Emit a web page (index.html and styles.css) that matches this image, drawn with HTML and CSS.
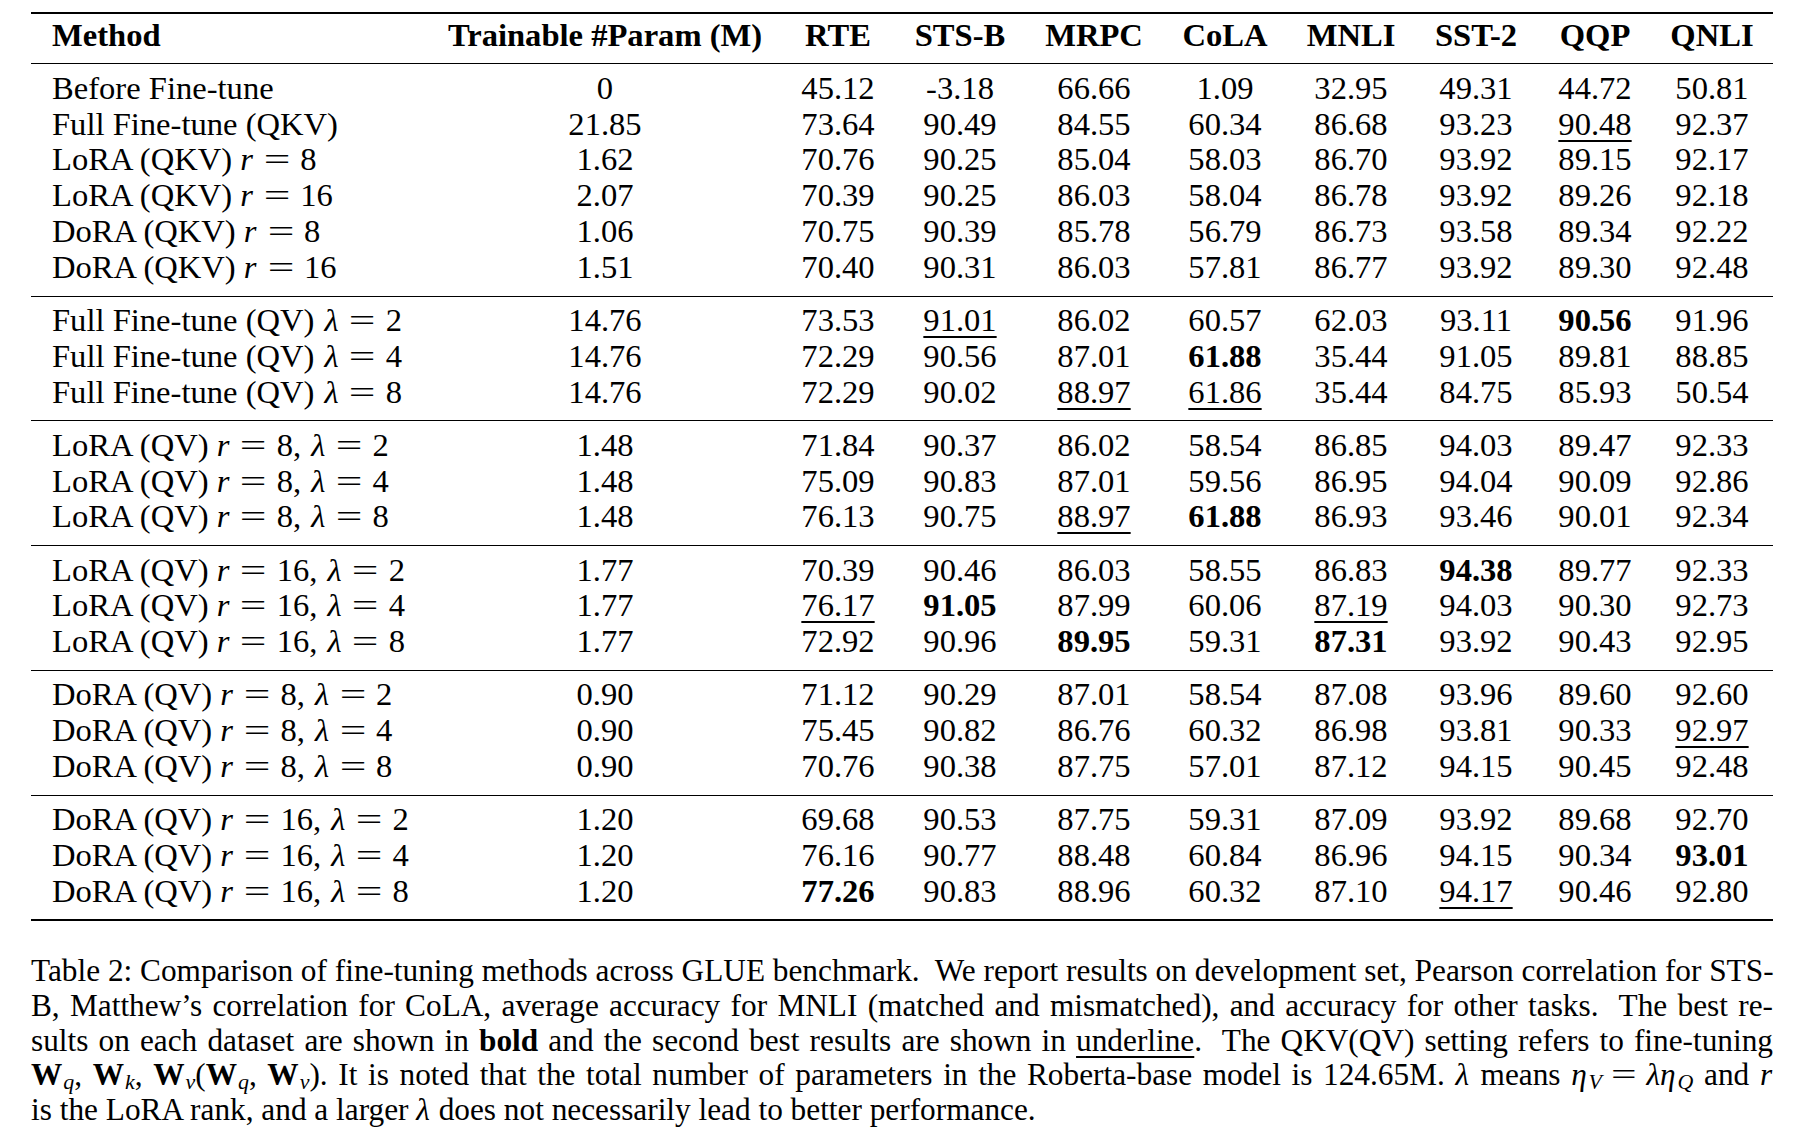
FILE: index.html
```html
<!DOCTYPE html>
<html lang="en">
<head>
<meta charset="utf-8">
<title>Table 2: Comparison of fine-tuning methods across GLUE benchmark</title>
<link rel="stylesheet" href="styles.css">
</head>
<body>
<div class="page">
  <table class="results">
    <colgroup>
      <col class="c-method">
      <col class="c-param">
      <col class="c-rte">
      <col class="c-stsb">
      <col class="c-mrpc">
      <col class="c-cola">
      <col class="c-mnli">
      <col class="c-sst2">
      <col class="c-qqp">
      <col class="c-qnli">
    </colgroup>
    <thead>
      <tr>
        <th class="name">Method</th>
        <th>Trainable #Param (M)</th>
        <th>RTE</th>
        <th>STS-B</th>
        <th>MRPC</th>
        <th>CoLA</th>
        <th>MNLI</th>
        <th>SST-2</th>
        <th>QQP</th>
        <th>QNLI</th>
      </tr>
    </thead>
    <tbody class="first-group">
      <tr><td class="name">Before Fine-tune</td><td>0</td><td>45.12</td><td>-3.18</td><td>66.66</td><td>1.09</td><td>32.95</td><td>49.31</td><td>44.72</td><td>50.81</td></tr>
      <tr><td class="name">Full Fine-tune (QKV)</td><td>21.85</td><td>73.64</td><td>90.49</td><td>84.55</td><td>60.34</td><td>86.68</td><td>93.23</td><td><span class="second">90.48</span></td><td>92.37</td></tr>
      <tr><td class="name">LoRA (QKV) <i class="mv">r</i><span class="eq">=</span>8</td><td>1.62</td><td>70.76</td><td>90.25</td><td>85.04</td><td>58.03</td><td>86.70</td><td>93.92</td><td>89.15</td><td>92.17</td></tr>
      <tr><td class="name">LoRA (QKV) <i class="mv">r</i><span class="eq">=</span>16</td><td>2.07</td><td>70.39</td><td>90.25</td><td>86.03</td><td>58.04</td><td>86.78</td><td>93.92</td><td>89.26</td><td>92.18</td></tr>
      <tr><td class="name">DoRA (QKV) <i class="mv">r</i><span class="eq">=</span>8</td><td>1.06</td><td>70.75</td><td>90.39</td><td>85.78</td><td>56.79</td><td>86.73</td><td>93.58</td><td>89.34</td><td>92.22</td></tr>
      <tr><td class="name">DoRA (QKV) <i class="mv">r</i><span class="eq">=</span>16</td><td>1.51</td><td>70.40</td><td>90.31</td><td>86.03</td><td>57.81</td><td>86.77</td><td>93.92</td><td>89.30</td><td>92.48</td></tr>
    </tbody>
    <tbody>
      <tr><td class="name">Full Fine-tune (QV) <i class="mv lam">λ</i><span class="eq">=</span>2</td><td>14.76</td><td>73.53</td><td><span class="second">91.01</span></td><td>86.02</td><td>60.57</td><td>62.03</td><td>93.11</td><td><b class="best">90.56</b></td><td>91.96</td></tr>
      <tr><td class="name">Full Fine-tune (QV) <i class="mv lam">λ</i><span class="eq">=</span>4</td><td>14.76</td><td>72.29</td><td>90.56</td><td>87.01</td><td><b class="best">61.88</b></td><td>35.44</td><td>91.05</td><td>89.81</td><td>88.85</td></tr>
      <tr><td class="name">Full Fine-tune (QV) <i class="mv lam">λ</i><span class="eq">=</span>8</td><td>14.76</td><td>72.29</td><td>90.02</td><td><span class="second">88.97</span></td><td><span class="second">61.86</span></td><td>35.44</td><td>84.75</td><td>85.93</td><td>50.54</td></tr>
    </tbody>
    <tbody>
      <tr><td class="name">LoRA (QV) <i class="mv">r</i><span class="eq">=</span>8<span class="cm">,</span><i class="mv lam">λ</i><span class="eq">=</span>2</td><td>1.48</td><td>71.84</td><td>90.37</td><td>86.02</td><td>58.54</td><td>86.85</td><td>94.03</td><td>89.47</td><td>92.33</td></tr>
      <tr><td class="name">LoRA (QV) <i class="mv">r</i><span class="eq">=</span>8<span class="cm">,</span><i class="mv lam">λ</i><span class="eq">=</span>4</td><td>1.48</td><td>75.09</td><td>90.83</td><td>87.01</td><td>59.56</td><td>86.95</td><td>94.04</td><td>90.09</td><td>92.86</td></tr>
      <tr><td class="name">LoRA (QV) <i class="mv">r</i><span class="eq">=</span>8<span class="cm">,</span><i class="mv lam">λ</i><span class="eq">=</span>8</td><td>1.48</td><td>76.13</td><td>90.75</td><td><span class="second">88.97</span></td><td><b class="best">61.88</b></td><td>86.93</td><td>93.46</td><td>90.01</td><td>92.34</td></tr>
    </tbody>
    <tbody>
      <tr><td class="name">LoRA (QV) <i class="mv">r</i><span class="eq">=</span>16<span class="cm">,</span><i class="mv lam">λ</i><span class="eq">=</span>2</td><td>1.77</td><td>70.39</td><td>90.46</td><td>86.03</td><td>58.55</td><td>86.83</td><td><b class="best">94.38</b></td><td>89.77</td><td>92.33</td></tr>
      <tr><td class="name">LoRA (QV) <i class="mv">r</i><span class="eq">=</span>16<span class="cm">,</span><i class="mv lam">λ</i><span class="eq">=</span>4</td><td>1.77</td><td><span class="second">76.17</span></td><td><b class="best">91.05</b></td><td>87.99</td><td>60.06</td><td><span class="second">87.19</span></td><td>94.03</td><td>90.30</td><td>92.73</td></tr>
      <tr><td class="name">LoRA (QV) <i class="mv">r</i><span class="eq">=</span>16<span class="cm">,</span><i class="mv lam">λ</i><span class="eq">=</span>8</td><td>1.77</td><td>72.92</td><td>90.96</td><td><b class="best">89.95</b></td><td>59.31</td><td><b class="best">87.31</b></td><td>93.92</td><td>90.43</td><td>92.95</td></tr>
    </tbody>
    <tbody>
      <tr><td class="name">DoRA (QV) <i class="mv">r</i><span class="eq">=</span>8<span class="cm">,</span><i class="mv lam">λ</i><span class="eq">=</span>2</td><td>0.90</td><td>71.12</td><td>90.29</td><td>87.01</td><td>58.54</td><td>87.08</td><td>93.96</td><td>89.60</td><td>92.60</td></tr>
      <tr><td class="name">DoRA (QV) <i class="mv">r</i><span class="eq">=</span>8<span class="cm">,</span><i class="mv lam">λ</i><span class="eq">=</span>4</td><td>0.90</td><td>75.45</td><td>90.82</td><td>86.76</td><td>60.32</td><td>86.98</td><td>93.81</td><td>90.33</td><td><span class="second">92.97</span></td></tr>
      <tr><td class="name">DoRA (QV) <i class="mv">r</i><span class="eq">=</span>8<span class="cm">,</span><i class="mv lam">λ</i><span class="eq">=</span>8</td><td>0.90</td><td>70.76</td><td>90.38</td><td>87.75</td><td>57.01</td><td>87.12</td><td>94.15</td><td>90.45</td><td>92.48</td></tr>
    </tbody>
    <tbody>
      <tr><td class="name">DoRA (QV) <i class="mv">r</i><span class="eq">=</span>16<span class="cm">,</span><i class="mv lam">λ</i><span class="eq">=</span>2</td><td>1.20</td><td>69.68</td><td>90.53</td><td>87.75</td><td>59.31</td><td>87.09</td><td>93.92</td><td>89.68</td><td>92.70</td></tr>
      <tr><td class="name">DoRA (QV) <i class="mv">r</i><span class="eq">=</span>16<span class="cm">,</span><i class="mv lam">λ</i><span class="eq">=</span>4</td><td>1.20</td><td>76.16</td><td>90.77</td><td>88.48</td><td>60.84</td><td>86.96</td><td>94.15</td><td>90.34</td><td><b class="best">93.01</b></td></tr>
      <tr><td class="name">DoRA (QV) <i class="mv">r</i><span class="eq">=</span>16<span class="cm">,</span><i class="mv lam">λ</i><span class="eq">=</span>8</td><td>1.20</td><td><b class="best">77.26</b></td><td>90.83</td><td>88.96</td><td>60.32</td><td>87.10</td><td><span class="second">94.17</span></td><td>90.46</td><td>92.80</td></tr>
    </tbody>
  </table>

  <p class="caption">
    <span class="line">Table 2: Comparison of fine-tuning methods across GLUE benchmark.&nbsp; We report results on development set, Pearson correlation for STS-</span>
    <span class="line">B, Matthew’s correlation for CoLA, average accuracy for MNLI (matched and mismatched), and accuracy for other tasks.&nbsp; The best re-</span>
    <span class="line">sults on each dataset are shown in <b>bold</b> and the second best results are shown in <span class="second">underline</span>.&nbsp; The QKV(QV) setting refers to fine-tuning</span>
    <span class="line"><b class="mb">W</b><sub>q</sub>, <b class="mb">W</b><sub>k</sub>, <b class="mb">W</b><sub>v</sub>(<b class="mb">W</b><sub>q</sub>, <b class="mb">W</b><sub>v</sub>). It is noted that the total number of parameters in the Roberta-base model is 124.65M. <i class="mv">λ</i> means <i class="mv">η</i><sub>V</sub><span class="eq">=</span><i class="mv">λη</i><sub>Q</sub> and <i class="mv">r</i></span>
    <span class="line last">is the LoRA rank, and a larger <i class="mv">λ</i> does not necessarily lead to better performance.</span>
  </p>
</div>
</body>
</html>
```

FILE: styles.css
```css
* {
  box-sizing: border-box;
}

html, body {
  margin: 0;
  padding: 0;
  background: #ffffff;
}

body {
  color: #000000;
  font-family: "Liberation Serif", "Times New Roman", serif;
}

.page {
  width: 1808px;
  padding: 12px 0 0 31px;
}

/* ---------- table ---------- */
.results {
  width: 1742px;
  border-collapse: collapse;
  table-layout: fixed;
  font-size: 32.6px;
  line-height: 35.8px;
}

.c-method { width: 396px; }
.c-param  { width: 356px; }
.c-rte    { width: 110px; }
.c-stsb   { width: 134px; }
.c-mrpc   { width: 134px; }
.c-cola   { width: 128px; }
.c-mnli   { width: 124px; }
.c-sst2   { width: 126px; }
.c-qqp    { width: 112px; }
.c-qnli   { width: 122px; }

.results th,
.results td {
  padding: 0;
  text-align: center;
  white-space: nowrap;
  font-weight: normal;
}

.results th {
  font-weight: bold;
  padding-top: 4px;
  padding-bottom: 9px;
}

.results .name {
  text-align: left;
  padding-left: 21px;
}

.results thead {
  border-top: 2.4px solid #000;
  border-bottom: 1.5px solid #000;
}

.results tbody + tbody {
  border-top: 1.5px solid #000;
}

.results tbody:last-child {
  border-bottom: 2.4px solid #000;
}

.results tbody tr:first-child td {
  padding-top: 6.4px;
}

.results tbody tr:last-child td {
  padding-bottom: 10px;
}

.results .first-group tr:first-child td {
  padding-top: 7px;
}

.results .first-group tr:last-child td {
  padding-bottom: 10px;
}

.best {
  font-weight: bold;
}

.second {
  text-decoration: underline;
  text-decoration-thickness: 1.5px;
  text-underline-offset: 5px;
}

/* math-ish pieces */
.mv {
  font-style: italic;
  padding-right: 0.03em;
}

.results .lam {
  padding: 0 0.02em 0 0.06em;
}

.eq {
  display: inline-block;
  line-height: 1;
  margin: 0 0.43em;
  transform: scaleX(1.45);
}

.cm {
  padding-right: 0.25em;
}

.mb {
  font-weight: bold;
  font-style: normal;
}

sub {
  display: inline-block;
  font-size: 0.7em;
  font-style: italic;
  line-height: 0.9;
  vertical-align: -0.15em;
  margin-left: 1px;
}

/* ---------- caption ---------- */
.caption {
  width: 1742px;
  margin: 33px 0 0 0;
  font-size: 31.3px;
  line-height: 34.6px;
}

.caption .line {
  display: block;
  text-align: justify;
  text-align-last: justify;
  white-space: nowrap;
}

.caption .line.last {
  text-align: left;
  text-align-last: left;
}
```
